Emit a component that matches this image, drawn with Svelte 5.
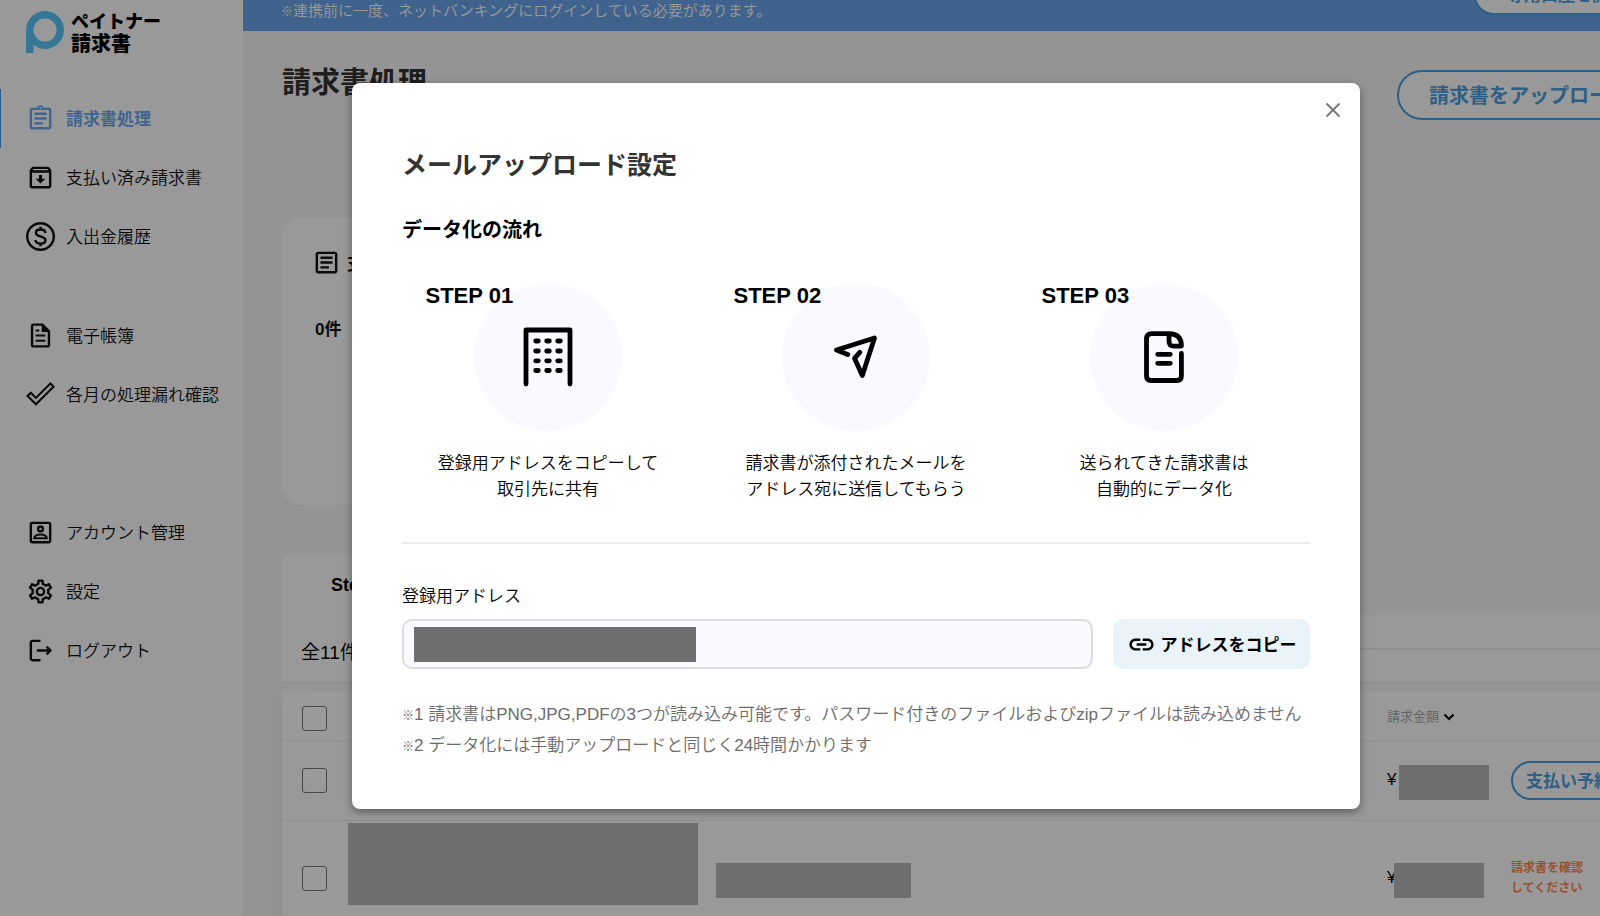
<script lang="ts">
	const menu = [
		[
			{ icon: 'invoice', label: '請求書処理', active: true },
			{ icon: 'archive', label: '支払い済み請求書' },
			{ icon: 'dollar', label: '入出金履歴' }
		],
		[
			{ icon: 'file', label: '電子帳簿' },
			{ icon: 'check', label: '各月の処理漏れ確認' }
		],
		[
			{ icon: 'account', label: 'アカウント管理' },
			{ icon: 'settings', label: '設定' },
			{ icon: 'logout', label: 'ログアウト' }
		]
	];

	const steps = [
		{ title: 'STEP 01', icon: 'building', lines: ['登録用アドレスをコピーして', '取引先に共有'] },
		{ title: 'STEP 02', icon: 'plane', lines: ['請求書が添付されたメールを', 'アドレス宛に送信してもらう'] },
		{ title: 'STEP 03', icon: 'document', lines: ['送られてきた請求書は', '自動的にデータ化'] }
	];
</script>

{#snippet menuIcon(name: string)}
	<svg class="icon" viewBox="0 0 24 24" aria-hidden="true">
		{#if name === 'invoice'}
			<path
				d="M7 15h7v2H7zm0-4h10v2H7zm0-4h10v2H7zM19 3h-4.18C14.4 1.84 13.3 1 12 1c-1.3 0-2.4.84-2.82 2H5c-1.1 0-2 .9-2 2v14c0 1.1.9 2 2 2h14c1.1 0 2-.9 2-2V5c0-1.1-.9-2-2-2zm-7-.25c.41 0 .75.34.75.75s-.34.75-.75.75-.75-.34-.75-.75.34-.75.75-.75zM19 19H5V5h14v14z"
			/>
		{:else if name === 'archive'}
			<path
				d="M20.54 5.23l-1.39-1.68C18.88 3.21 18.47 3 18 3H6c-.47 0-.88.21-1.16.55L3.46 5.23C3.17 5.57 3 6.02 3 6.5V19c0 1.1.9 2 2 2h14c1.1 0 2-.9 2-2V6.5c0-.48-.17-.93-.46-1.27zM6.24 5h11.52l.83 1H5.42l.82-1zM5 19V8h14v11H5zM13.2 10h-2.4v3H8l4 4 4-4h-2.8z"
			/>
		{:else if name === 'dollar'}
			<g class="line">
				<circle cx="12" cy="12" r="11" />
				<path
					d="M12 4v2.2M12 17.8V20M16 9.2c0-1.8-1.6-3-4-3s-3.8 1.1-3.8 2.7c0 1.8 1.6 2.5 3.8 3.1s4.1 1.3 4.1 3.1c0 1.7-1.7 2.8-4.1 2.8s-4.2-1.2-4.2-3"
				/>
			</g>
		{:else if name === 'file'}
			<path
				d="M14 2H6c-1.1 0-2 .9-2 2v16c0 1.1.9 2 2 2h12c1.1 0 2-.9 2-2V8l-6-6zM6 20V4h7v5h5v11H6zM8 7h3v1.7H8zM8 11.2h8v1.7H8zM8 15.5h8v1.7H8z"
			/>
		{:else if name === 'check'}
			<path class="line thin" d="M1.3 13.2 4 10.6l4.2 4.2L20.2 2.9l2.6 2.6L8.2 20.1z" />
		{:else if name === 'account'}
			<g class="line">
				<rect x="4" y="4" width="16" height="16" rx="1" />
				<circle cx="12" cy="9" r="2" />
				<path class="thin" d="M6.8 16.8c0-2 2.7-3.1 5.2-3.1s5.2 1.1 5.2 3.1z" />
			</g>
		{:else if name === 'settings'}
			<path
				d="M19.43 12.98c.04-.32.07-.64.07-.98 0-.34-.03-.66-.07-.98l2.11-1.65c.19-.15.24-.42.12-.64l-2-3.46c-.09-.16-.26-.25-.44-.25-.06 0-.12.01-.17.03l-2.49 1c-.52-.4-1.08-.73-1.69-.98l-.38-2.65C14.46 2.18 14.25 2 14 2h-4c-.25 0-.46.18-.49.42l-.38 2.65c-.61.25-1.17.59-1.69.98l-2.49-1c-.06-.02-.12-.03-.18-.03-.17 0-.34.09-.43.25l-2 3.46c-.13.22-.07.49.12.64l2.11 1.65c-.04.32-.07.65-.07.98 0 .33.03.66.07.98l-2.11 1.65c-.19.15-.24.42-.12.64l2 3.46c.09.16.26.25.44.25.06 0 .12-.01.17-.03l2.49-1c.52.4 1.08.73 1.69.98l.38 2.65c.03.24.24.42.49.42h4c.25 0 .46-.18.49-.42l.38-2.65c.61-.25 1.17-.59 1.69-.98l2.49 1c.06.02.12.03.18.03.17 0 .34-.09.43-.25l2-3.46c.12-.22.07-.49-.12-.64l-2.11-1.65zm-1.98-1.71c.04.31.05.52.05.73 0 .21-.02.43-.05.73l-.14 1.13.89.7 1.08.84-.7 1.21-1.27-.51-1.04-.42-.9.68c-.43.32-.84.56-1.25.73l-1.06.43-.16 1.13-.2 1.35h-1.4l-.19-1.35-.16-1.13-1.06-.43c-.43-.18-.83-.41-1.23-.71l-.91-.7-1.06.43-1.27.51-.7-1.21 1.08-.84.89-.7-.14-1.13c-.03-.31-.05-.54-.05-.74s.02-.43.05-.73l.14-1.13-.89-.7-1.08-.84.7-1.21 1.27.51 1.04.42.9-.68c.43-.32.84-.56 1.25-.73l1.06-.43.16-1.13.2-1.35h1.39l.19 1.35.16 1.13 1.06.43c.43.18.83.41 1.23.71l.91.7 1.06-.43 1.27-.51.7 1.21-1.07.85-.89.7.14 1.13zM12 8c-2.21 0-4 1.79-4 4s1.79 4 4 4 4-1.79 4-4-1.79-4-4-4zm0 6c-1.1 0-2-.9-2-2s.9-2 2-2 2 .9 2 2-.9 2-2 2z"
			/>
		{:else if name === 'logout'}
			<path class="line" d="M12 4H5.5C4.5 4 4 4.5 4 5.5v13c0 1 .5 1.5 1.5 1.5H12M9 12h11M17 8.8l3.2 3.2-3.2 3.2" />
		{:else if name === 'article'}
			<path
				d="M19 5v14H5V5h14m0-2H5c-1.1 0-2 .9-2 2v14c0 1.1.9 2 2 2h14c1.1 0 2-.9 2-2V5c0-1.1-.9-2-2-2zM14 17H7v-2h7v2zm3-4H7v-2h10v2zm0-4H7V7h10v2z"
			/>
		{:else if name === 'link'}
			<path
				d="M17 7h-4v2h4c1.65 0 3 1.35 3 3s-1.35 3-3 3h-4v2h4c2.76 0 5-2.24 5-5s-2.24-5-5-5zm-6 8H7c-1.65 0-3-1.35-3-3s1.35-3 3-3h4V7H7c-2.76 0-5 2.24-5 5s2.24 5 5 5h4v-2zm-3-4h8v2H8z"
			/>
		{/if}
	</svg>
{/snippet}

<div class="page">
	<aside>
		<a class="logo" href="/">
			<svg viewBox="0 0 38 42" aria-hidden="true">
				<path
					fill-rule="evenodd"
					d="M0 42V19a19 19 0 1 1 7.5 15.1V42zM19 7.5a11.5 11.5 0 1 0 0 23 11.5 11.5 0 1 0 0-23z"
				/>
			</svg>
			<span>ペイトナー<br /><b>請求書</b></span>
		</a>
		<nav>
			{#each menu as group}
				<ul>
					{#each group as item}
						<li>
							<a href="/" class:active={item.active}>
								{@render menuIcon(item.icon)}
								<span>{item.label}</span>
							</a>
						</li>
					{/each}
				</ul>
			{/each}
		</nav>
	</aside>

	<main>
		<div class="banner">
			<p><small>※</small>連携前に一度、ネットバンキングにログインしている必要があります。</p>
			<button class="pill">専用口座を開設する</button>
		</div>

		<header>
			<h1>請求書処理</h1>
			<button class="pill large">請求書をアップロード</button>
		</header>

		<section class="summary">
			<h2>{@render menuIcon('article')} 支払い予定</h2>
			<p>0件</p>
		</section>

		<section class="list">
			<div class="tab">Step1</div>
			<div class="toolbar">
				<span>全11件</span>
				<div class="filter"></div>
			</div>
			<table>
				<colgroup>
					<col class="col-check" />
					<col class="col-name" />
					<col />
					<col class="col-price" />
					<col class="col-action" />
				</colgroup>
				<thead>
					<tr>
						<th class="check-all"><input type="checkbox" aria-label="すべて選択" /></th>
						<th></th>
						<th></th>
						<th>
							請求金額
							<svg class="chevron" viewBox="0 0 12 8" aria-hidden="true"><path d="M1.5 1.5 6 6l4.5-4.5" /></svg>
						</th>
						<th></th>
					</tr>
				</thead>
				<tbody>
					<tr>
						<td><input type="checkbox" aria-label="選択" /></td>
						<td></td>
						<td></td>
						<td><div class="price">¥<span class="mask"></span></div></td>
						<td><button class="pill">支払い予約</button></td>
					</tr>
					<tr class="tall">
						<td><input type="checkbox" aria-label="選択" /></td>
						<td class="name"><div class="mask name-mask"></div></td>
						<td><div class="mask detail-mask"></div></td>
						<td><div class="price overlap">¥<span class="mask"></span></div></td>
						<td class="warning">請求書を確認<br />してください</td>
					</tr>
				</tbody>
			</table>
		</section>
	</main>

	<div class="overlay">
		<div class="modal" role="dialog" aria-modal="true" aria-labelledby="modal-title">
			<button class="close" aria-label="閉じる">
				<svg viewBox="0 0 16 16" aria-hidden="true"><path d="M1.5 1.5l13 13M14.5 1.5l-13 13" /></svg>
			</button>
			<h2 id="modal-title">メールアップロード設定</h2>
			<h3>データ化の流れ</h3>
			<div class="steps">
				{#each steps as step}
					<div class="step">
						<strong>{step.title}</strong>
						<div class="circle">
							<svg viewBox="-32 -32 64 64" aria-hidden="true">
								{#if step.icon === 'building'}
									<path d="M-22 27V-27H22V27" />
									<path
										d="M-12.3-16h2.6M-1.3-16h2.6M9.7-16h2.6M-12.3-6h2.6M-1.3-6h2.6M9.7-6h2.6M-12.3 3.8h2.6M-1.3 3.8h2.6M9.7 3.8h2.6M-12.3 13.5h2.6M-1.3 13.5h2.6M9.7 13.5h2.6"
									/>
								{:else if step.icon === 'plane'}
									<path d="M-8.3-2.5-19.5-7 18.5-19 6.3 18.5-1.5 1.3 3.8-4.7" />
								{:else}
									<path
										d="M17.4-3.5V19q0 4.5-4.5 4.5H-13q-4.5 0-4.5-4.5V-18q0-5.3 5.3-5.3H5q12.4 0 12.4 12.4H10q-5 0-5-5v-7"
									/>
									<path d="M-6.3-2.7H6.3M-6.3 6.3H6.3" />
								{/if}
							</svg>
						</div>
						<p>{step.lines[0]}<br />{step.lines[1]}</p>
					</div>
				{/each}
			</div>
			<hr />
			<label for="address">登録用アドレス</label>
			<div class="copy">
				<input id="address" type="text" readonly />
				<button>{@render menuIcon('link')} <span>アドレスをコピー</span></button>
			</div>
			<p class="notes">
				<small>※</small>1 請求書はPNG,JPG,PDFの3つが読み込み可能です。パスワード付きのファイルおよびzipファイルは読み込めません<br />
				<small>※</small>2 データ化には手動アップロードと同じく24時間かかります
			</p>
		</div>
	</div>
</div>

<style>
	:global(body) {
		margin: 0;
		overflow: hidden;
	}
	.page {
		position: relative;
		display: flex;
		min-width: 1712px;
		height: 100vh;
		overflow: hidden;
		background: #f7f7f7;
		color: #111;
		font-family: 'Liberation Sans', 'Noto Sans CJK JP', sans-serif;
		font-size: 17px;
		font-weight: 350;
		white-space: nowrap;
	}
	.page * {
		box-sizing: border-box;
	}
	h1,
	h2,
	h3,
	p,
	ul {
		margin: 0;
		padding: 0;
		list-style: none;
	}
	button,
	input {
		font: inherit;
		color: inherit;
		margin: 0;
	}
	a {
		color: inherit;
		text-decoration: none;
	}
	small {
		font-size: 12px;
		line-height: 1;
	}
	.icon {
		width: 29px;
		height: 29px;
		flex: none;
		fill: currentColor;
	}
	.line {
		fill: none;
		stroke: currentColor;
		stroke-width: 2;
	}
	.thin {
		stroke-width: 1.7;
	}

	aside {
		width: 243px;
		flex: none;
		background: #fff;
	}
	.logo {
		display: flex;
		gap: 7px;
		height: 89px;
		padding: 11px 26px;
		color: #000;
		font-size: 18px;
		font-weight: 900;
		line-height: 22px;
	}
	.logo svg {
		width: 38px;
		height: 42px;
		fill: #5ac6fb;
	}
	.logo b {
		font-size: 20px;
		font-weight: 900;
	}
	nav ul + ul {
		margin-top: 40px;
	}
	nav ul:last-child {
		margin-top: 79px;
	}
	nav a {
		display: flex;
		align-items: center;
		gap: 11px;
		height: 59px;
		padding-left: 26px;
	}
	nav span {
		padding-bottom: 2px;
	}
	nav .active {
		padding-left: 25px;
		border-left: 1px solid #4b93e6;
		color: #69a8f2;
		font-weight: 700;
	}

	main {
		flex: 1;
		min-width: 0;
	}
	.banner {
		display: flex;
		justify-content: space-between;
		align-items: flex-end;
		height: 80px;
		margin-top: -49px;
		padding: 0 19px 10px 38px;
		background: #69a5eb;
		color: #fff;
		font-size: 15px;
		line-height: 20px;
	}
	.banner .pill {
		margin-bottom: 6px;
		padding: 0 31px;
	}
	.pill {
		height: 39px;
		padding: 0 13px 2px;
		border: 2px solid #4a9de0;
		border-radius: 25px;
		background: #fff;
		color: #4a9de0;
		font-size: 17px;
		font-weight: 700;
	}
	.pill.large {
		height: 50px;
		padding: 0 30px 2px;
		font-size: 20px;
	}
	header {
		display: flex;
		justify-content: space-between;
		align-items: flex-start;
		padding: 39px 51px 0 39px;
	}
	h1 {
		color: #333;
		font-size: 29px;
		line-height: 26px;
	}
	.summary {
		width: 800px;
		height: 287px;
		margin: 98px 0 0 39px;
		padding: 30px 33px;
		border-radius: 20px;
		background: #fff;
		font-weight: 700;
	}
	.summary h2 {
		display: flex;
		align-items: center;
		gap: 6px;
		height: 29px;
		margin-left: -3px;
		font-size: 17px;
	}
	.summary p {
		margin-top: 40px;
		line-height: 26px;
	}
	.list {
		margin: 50px 51px 0 39px;
		color: #000;
	}
	.tab {
		width: 220px;
		height: 60px;
		padding-left: 49px;
		border-radius: 8px 8px 0 0;
		background: #fff;
		font-size: 18px;
		font-weight: 700;
		line-height: 60px;
	}
	.toolbar {
		display: flex;
		align-items: center;
		justify-content: space-between;
		height: 68px;
		padding-left: 19px;
		border-bottom: 1px solid #eee;
		background: #fff;
		font-size: 19px;
	}
	.toolbar span {
		padding-top: 3px;
	}
	.filter {
		width: 600px;
		height: 2px;
		background: #efefef;
	}
	table {
		width: 100%;
		margin-top: 8px;
		table-layout: fixed;
		border-collapse: collapse;
		background: #fff;
		box-shadow: 0 8px 24px rgba(105, 165, 235, 0.14), 0 -8px 0 #fafafa;
	}
	.col-check {
		width: 66px;
	}
	.col-name {
		width: 368px;
	}
	.col-price {
		width: 124px;
	}
	.col-action {
		width: 150px;
	}
	th,
	td {
		height: 80px;
		padding: 0;
		border-bottom: 1px solid #eee;
		text-align: left;
	}
	th {
		height: 49px;
		color: #aaa;
		font-size: 13px;
		font-weight: 400;
	}
	.check-all {
		padding-top: 6px;
	}
	.tall td {
		height: 116px;
	}
	input[type='checkbox'] {
		display: block;
		appearance: none;
		width: 25px;
		height: 25px;
		margin-left: 20px;
		border: 1px solid #777;
		border-radius: 3px;
	}
	.chevron {
		width: 12px;
		height: 8px;
		fill: none;
		stroke: #000;
		stroke-width: 2;
	}
	.mask {
		background: #b9b9b9;
	}
	.tall .name {
		padding-top: 2px;
		vertical-align: top;
	}
	.name-mask {
		width: 350px;
		height: 82px;
	}
	.detail-mask {
		width: 195px;
		height: 35px;
		margin-top: 4px;
	}
	.price {
		display: flex;
		align-items: center;
		gap: 3px;
	}
	.price .mask {
		width: 90px;
		height: 35px;
		margin-top: 4px;
	}
	.overlap .mask {
		margin-left: -5px;
	}
	.warning {
		color: #ff864e;
		font-size: 12px;
		font-weight: 700;
		line-height: 20px;
	}

	.overlay {
		position: absolute;
		inset: 0;
		display: flex;
		justify-content: center;
		align-items: flex-start;
		padding-top: 83px;
		background: rgba(0, 0, 0, 0.4);
	}
	.modal {
		position: relative;
		width: 1008px;
		padding: 62px 50px 48px;
		border-radius: 8px;
		background: #fff;
		color: #000;
		box-shadow: 0 3px 8px rgba(0, 0, 0, 0.4);
	}
	.close {
		position: absolute;
		top: 11px;
		right: 11px;
		display: grid;
		place-items: center;
		width: 32px;
		height: 32px;
		padding: 0;
		border: 0;
		background: none;
	}
	.close svg {
		width: 16px;
		height: 16px;
		stroke: #757575;
		stroke-width: 1.8;
	}
	.modal h2 {
		color: #333;
		font-size: 25px;
		line-height: 40px;
	}
	.modal h3 {
		margin-top: 30px;
		font-size: 20px;
		line-height: 30px;
	}
	.steps {
		display: flex;
		justify-content: center;
		gap: 63px;
		margin-top: 38px;
	}
	.step {
		position: relative;
		width: 245px;
		text-align: center;
		line-height: 26px;
	}
	.step strong {
		position: absolute;
		top: 0;
		left: 0;
		font-size: 22px;
		font-weight: 700;
	}
	.circle {
		display: grid;
		place-items: center;
		width: 148px;
		height: 148px;
		margin: 0 auto 20px;
		border-radius: 50%;
		background: #f9f9ff;
	}
	.circle svg {
		width: 64px;
		height: 64px;
		fill: none;
		stroke: #000;
		stroke-width: 4.8;
		stroke-linecap: round;
		stroke-linejoin: round;
	}
	hr {
		height: 2px;
		margin: 39px 0 40px;
		border: 0;
		background: #eee;
	}
	label {
		display: block;
		line-height: 26px;
	}
	.copy {
		display: flex;
		gap: 20px;
		height: 50px;
		margin-top: 9px;
	}
	.copy input {
		flex: 1;
		min-width: 0;
		border: 2px solid #ddd;
		border-radius: 10px;
		background: linear-gradient(#6f6f6f, #6f6f6f) no-repeat 10px 6px / 282px 35px #f9f9ff;
	}
	.copy button {
		display: flex;
		align-items: center;
		justify-content: center;
		gap: 5px;
		width: 197px;
		padding: 0;
		border: 0;
		border-radius: 10px;
		background: #eaf3f9;
		font-weight: 700;
	}
	.copy span {
		padding-bottom: 2px;
	}
	.notes {
		margin-top: 30px;
		color: #6b6b6b;
		line-height: 31px;
	}
</style>
